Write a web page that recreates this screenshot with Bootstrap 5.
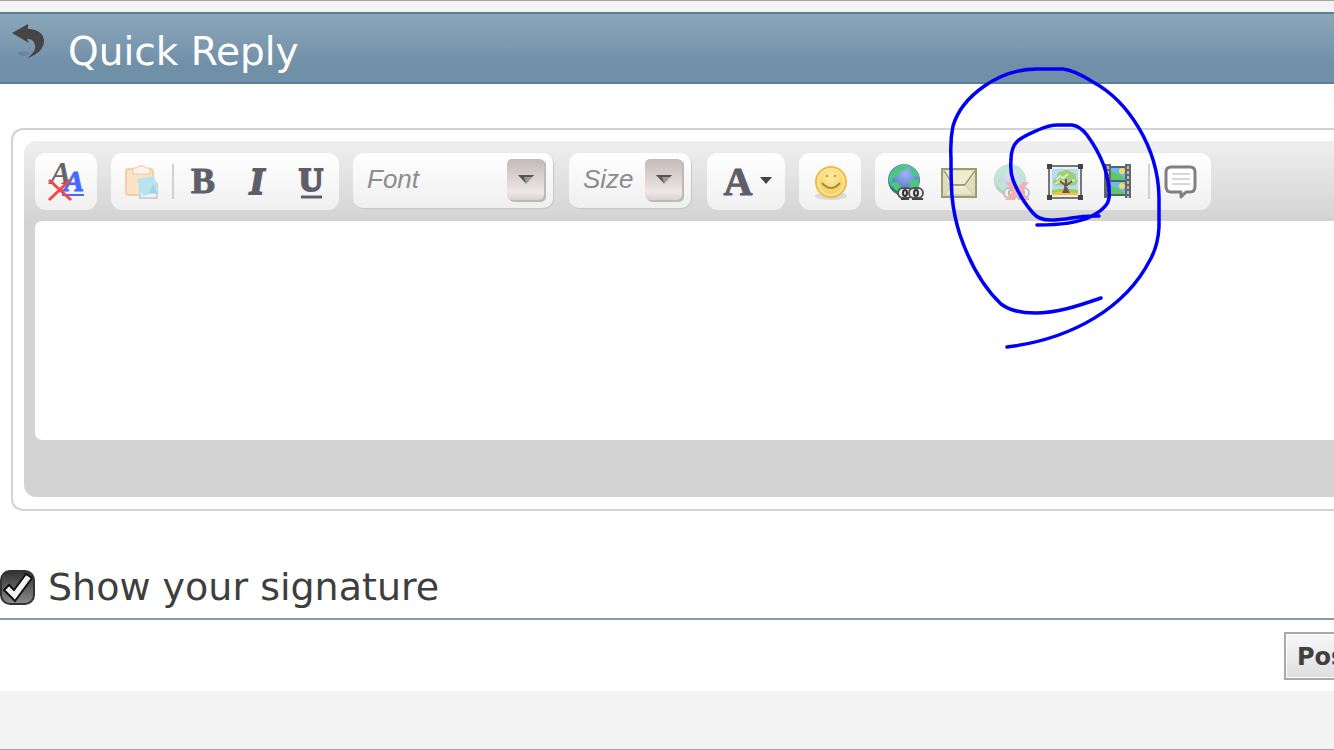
<!DOCTYPE html>
<html lang="en">
<head>
<meta charset="utf-8">
<meta name="viewport" content="width=device-width, initial-scale=1">
<title>Quick Reply</title>
<link rel="stylesheet" href="https://cdn.jsdelivr.net/npm/bootstrap@5.3.0/dist/css/bootstrap.min.css">
<style>
body { background: #f3f3f3; font-family: Verdana, "DejaVu Sans", sans-serif; color: #3e3e3e; }
.page { border-top: 1px solid #a3a3a3; border-bottom: 1px solid #a3a3a3; padding-top: 11px; min-height: 100vh; }
.block-head { height: 72px; border-top: 2px solid #5b7f9b; border-bottom: 2px solid #5b7f9b; background: linear-gradient(#8ca6ba, #7090a8 75%); padding-left: 12px; }
.block-head h2 { font-size: 39px; line-height: 44px; padding: 16px 0 0 22px; }
.block-head svg { margin-top: 10px; }
.block-body { padding: 44px 0 50px 11px; }
.editor-frame { border: 2px solid #d3d3d3; border-right: 0; border-radius: 12px 0 0 12px; padding: 11px 0 12px 11px; }
.editor { background: linear-gradient(#efefef, #d3d3d3 80px); border-radius: 12px 0 0 12px; padding: 12px 0 57px 11px; }
.tools { gap: 14px; margin-bottom: 11px; }
.group { height: 57px; border-radius: 11px; background: linear-gradient(#fff, #f0f0f0); }
.tool { width: 54px; height: 57px; border: 0; padding: 0; background: none; display: flex; align-items: center; justify-content: center; }
.links .tool { width: 53px; }
.tool svg { display: block; overflow: visible; }
.tool text { font-family: "Liberation Serif", serif; font-weight: 700; }
.rule { width: 2px; height: 35px; background: #d0d0d0; margin: 0 3px; }
.links .rule { margin: 0 4px; }
.combo { height: 55px; margin-right: 2px; border-radius: 10px; background: linear-gradient(#fff, #efefef); box-shadow: 1px 1px 1px #c6c6c6; }
.combo select { appearance: none; border: 0; background: none; width: 100%; height: 52px; padding: 0 0 0 14px; font: italic 26px "Liberation Sans", sans-serif; color: #8d8d8d; }
.combo svg { position: absolute; right: 7px; top: 6px; pointer-events: none; }
.font-combo { width: 200px; }
.size-combo { width: 122px; }
.message { display: block; width: 100%; height: 219px; border: 0; border-radius: 7px 0 0 7px; resize: none; background: #fff; padding: 12px; }
.signature { height: 57px; padding-bottom: 5px; }
.signature label { font-size: 38px; line-height: 50px; padding: 0 0 0 13px; }
.tick { appearance: none; width: 35px; height: 35px; margin: 0; border: 2px solid #333; border-radius: 10px; background: linear-gradient(#343434, #888); }
.tick:checked { background: url("data:image/svg+xml,%3Csvg xmlns='http://www.w3.org/2000/svg' viewBox='2 2 31 31'%3E%3Cpath d='M4 20l5-5 5 5L26 4l6 4-17 23z' fill='%23f3f3f3' stroke='%23111' stroke-width='2'/%3E%3C/svg%3E") center / 100% 100%, linear-gradient(#343434, #888); }
.actions { border-top: 2px solid #7f9db3; padding: 12px 0 11px; }
.post-slot { width: 50px; }
.post { height: 48px; border: 2px solid #a9a9a9; box-shadow: inset 0 0 0 1px #fff; background: linear-gradient(#f8f8f8, #dedede); font: 700 24px "DejaVu Sans", sans-serif; color: #404040; padding: 2px 11px 0; }
.ink { position: absolute; left: 940px; top: 59px; pointer-events: none; }
</style>
</head>
<body>
<main class="page position-relative overflow-hidden">
<form class="bg-white">
  <header class="block-head d-flex align-items-start">
    <svg width="34" height="38" viewBox="0 0 34 38" aria-hidden="true">
      <path d="M0 9L16 0v5c11 0 16 6 16 12 0 7-6 14-17 17 7-5 9-9 8-13-1-5-4-6-8-6l2 4z" fill="#454545"/>
      <path d="M5 29c4-2 9-2 13 0-3 3-8 5-13 0z" fill="#456279" opacity=".3"/>
    </svg>
    <h2 class="m-0 fw-normal text-white">Quick Reply</h2>
  </header>

  <div class="block-body">
    <div class="editor-frame">
      <div class="editor">
        <div class="tools d-flex" role="toolbar" aria-label="Formatting">
          <div class="group d-flex px-1">
            <button type="button" class="tool" aria-label="Remove formatting">
              <svg width="36" height="36" viewBox="0 0 36 36">
                <text x="2" y="20" font-size="32" font-style="italic" fill="#666">A</text>
                <text x="16" y="27" font-size="30" font-style="italic" fill="#4668ff" stroke="#4668ff">A</text>
                <path d="M14 31h22" stroke="#4668ff" stroke-width="2"/>
                <path d="M1 16l22 20M22 16L1 36" stroke="#fa4545" stroke-width="3"/>
              </svg>
            </button>
          </div>

          <div class="group d-flex align-items-center ps-1">
            <button type="button" class="tool" aria-label="Paste">
              <svg width="36" height="36" viewBox="0 0 36 36">
                <rect x="2" y="5" width="27" height="26" rx="3" fill="#fbe3c6" stroke="#efcfaa" stroke-width="2"/>
                <path d="M9 10V4h4l2-2h5l2 2h4v6z" fill="#fff4e7" stroke="#e4c9ac"/>
                <path d="M16 15h12l5 5v14H16z" fill="#eef3f4" stroke="#ccd3d7" stroke-width="2"/>
                <path d="M13 15l17-3 4 16-15 4z" fill="#b9e3f1"/>
                <path d="M29 20l5 10-9-1z" fill="#9fd3e6"/>
              </svg>
            </button>
            <span class="rule"></span>
            <button type="button" class="tool" aria-label="Bold">
              <svg width="36" height="36" viewBox="0 0 36 36"><text x="17" y="29" text-anchor="middle" font-size="36" fill="#5e5e69" stroke="#5e5e69">B</text></svg>
            </button>
            <button type="button" class="tool" aria-label="Italic">
              <svg width="36" height="36" viewBox="0 0 36 36"><text x="17" y="30" text-anchor="middle" font-size="38" font-style="italic" fill="#5e5e69" stroke="#5e5e69" stroke-width="2">I</text></svg>
            </button>
            <button type="button" class="tool" aria-label="Underline">
              <svg width="36" height="36" viewBox="0 0 36 36"><text x="17" y="27" text-anchor="middle" font-size="34" fill="#5e5e69" stroke="#5e5e69" stroke-width="2">U</text><path d="M7 33h21" stroke="#5e5e69" stroke-width="3"/></svg>
            </button>
          </div>

          <div class="combo font-combo position-relative">
            <select aria-label="Font"><option>Font</option></select>
            <svg width="39" height="43" viewBox="0 0 39 43" aria-hidden="true">
              <defs><linearGradient id="knob" x2="0" y2="1"><stop stop-color="#c3b9b9"/><stop offset=".8" stop-color="#eee7e7"/><stop offset="1" stop-color="#d8d2d2"/></linearGradient></defs>
              <rect x="2" y="1" width="37" height="42" rx="5" fill="#bdb9b9"/><rect width="37" height="41" rx="5" fill="url(#knob)"/>
              <path d="M11 16h16l-8 9z" fill="#999"/><path d="M11 16h16l-2 2h-8l2 6z" fill="#555"/>
            </svg>
          </div>

          <div class="combo size-combo position-relative">
            <select aria-label="Size"><option>Size</option></select>
            <svg width="39" height="43" viewBox="0 0 39 43" aria-hidden="true">
              <rect x="2" y="1" width="37" height="42" rx="5" fill="#bdb9b9"/><rect width="37" height="41" rx="5" fill="url(#knob)"/>
              <path d="M11 16h16l-8 9z" fill="#999"/><path d="M11 16h16l-2 2h-8l2 6z" fill="#555"/>
            </svg>
          </div>

          <div class="group d-flex px-2">
            <button type="button" class="tool w-auto ps-1" aria-label="Text colour">
              <svg width="58" height="36" viewBox="0 0 58 36">
                <text x="19" y="31" text-anchor="middle" font-size="40" fill="#5e5e69" stroke="#5e5e69">A</text>
                <path d="M41 13h12l-6 7z" fill="#444"/>
              </svg>
            </button>
          </div>

          <div class="group d-flex px-1">
            <button type="button" class="tool" aria-label="Smilies">
              <svg width="36" height="36" viewBox="0 0 36 36">
                <defs><radialGradient id="face" cy=".35"><stop stop-color="#fdeea4"/><stop offset="1" stop-color="#f8d264"/></radialGradient></defs>
                <ellipse cx="19" cy="32" rx="16" ry="4" fill="#dadada"/>
                <circle cx="19" cy="18" r="15" fill="url(#face)" stroke="#f4b83d" stroke-width="2"/>
                <circle cx="19" cy="18" r="13" fill="none" stroke="#fbe49a" stroke-width="2"/>
                <circle cx="15" cy="12" r="1" fill="#9c8243"/><circle cx="23" cy="12" r="1" fill="#9c8243"/>
                <path d="M10 19q9 10 18 0" fill="none" stroke="#a18b45" stroke-width="2"/>
              </svg>
            </button>
          </div>

          <div class="group links d-flex align-items-center px-1">
            <button type="button" class="tool" aria-label="Insert link">
              <svg width="36" height="36" viewBox="0 0 36 36">
                <defs>
                  <radialGradient id="sea" cx=".55" cy=".3" r=".7"><stop stop-color="#9ab9f5"/><stop offset="1" stop-color="#4562b8"/></radialGradient>
                  <g id="globe">
                    <circle cx="16" cy="16" r="16" fill="url(#sea)"/>
                    <path d="M3 9C7 2 15-1 21 1l-4 5-6 1-1 5-5 2-2 5-2-1q-1-5 2-9M2 19l7-1 5 5-2 8Q4 28 2 19M22 2q7 3 9 11l-5-1-4-5zM22 16l9-1q1 7-4 12l-5-4z" fill="#4acb79"/>
                    <path d="M3 23q7 8 15 8" fill="none" stroke="#287f50" stroke-width="2"/>
                  </g>
                  <g id="chain">
                    <rect x="10" y="24" width="14" height="10" rx="5" fill="#eee" stroke="#555" stroke-width="2"/>
                    <rect x="21" y="24" width="14" height="10" rx="5" fill="#eee" stroke="#555" stroke-width="2"/>
                    <path d="M13 35h8M24 35h11" stroke="#444" stroke-width="2"/>
                    <ellipse cx="17" cy="29" rx="2" ry="3" fill="#ddd" stroke="#333" stroke-width="2"/><ellipse cx="28" cy="29" rx="2" ry="3" fill="#ddd" stroke="#333" stroke-width="2"/>
                  </g>
                </defs>
                <use href="#globe"/><use href="#chain"/>
              </svg>
            </button>
            <button type="button" class="tool" aria-label="Insert email">
              <svg width="36" height="36" viewBox="0 0 36 36">
                <rect x="1" y="5" width="34" height="28" fill="#deddb6" stroke="#9c9b78" stroke-width="2"/>
                <path d="M3 31l10-11h10l10 11z" fill="#e9e8c8" stroke="#c8c7a5"/>
                <path d="M3 7l9 14h12L34 7" fill="#eeedd0" stroke="#a09f7a" stroke-width="2"/>
                <path d="M3 9l9 14h12L34 9" fill="none" stroke="#fff" opacity=".7"/>
              </svg>
            </button>
            <button type="button" class="tool" aria-label="Remove link">
              <svg width="36" height="36" viewBox="0 0 36 36" opacity=".32">
                <use href="#globe"/><use href="#chain"/>
                <path d="M11 18h8l5 5 5-5h6l-7 9 7 9h-8l-4-5-4 5h-8l8-9z" fill="#f22"/>
              </svg>
            </button>
            <button type="button" class="tool" aria-label="Insert image">
              <svg width="36" height="36" viewBox="0 0 36 36">
                <rect x="2" y="2" width="32" height="32" fill="#b4dcfa" stroke="#777" stroke-width="2"/>
                <rect x="4" y="4" width="28" height="28" fill="none" stroke="#eee" stroke-width="2"/>
                <path d="M5 26q13-3 26 0v5H5z" fill="#a6cf3d"/><path d="M5 29q10-3 26 0v2H5z" fill="#efc345"/>
                <path d="M6 19q0-5 4-6 0-6 6-6 5-3 8 1 6 1 5 6 3 4-1 7-5 2-8-1-5 3-8 1-5 2-6-2" fill="#a1ce75"/>
                <path d="M9 16l4-4 3 2 5-4M8 20l5-3 4 1M22 18l6-2" stroke="#d8edc5" stroke-width="2" fill="none"/>
                <path d="M19 29l-1-8-5-4M19 22l6-5M19 21v-6" stroke="#765252" stroke-width="2" fill="none"/><path d="M15 29l3-6h2l3 6z" fill="#765252"/>
                <path d="M0 0h5v5H0zM31 0h5v5h-5zM0 31h5v5H0zM31 31h5v5h-5z" fill="#444"/>
              </svg>
            </button>
            <button type="button" class="tool" aria-label="Insert video">
              <svg width="36" height="36" viewBox="0 0 36 36">
                <path d="M11 3h14v28H11z" fill="#65bdf3"/>
                <path d="M11 7q7 1 14 8v1H11zM11 22q7 1 14 8v1H11z" fill="#61c764"/>
                <circle cx="22" cy="7" r="3" fill="#f6dc59"/><circle cx="22" cy="22" r="3" fill="#f6dc59"/>
                <path d="M11 3h14M11 17h14M11 31h14" stroke="#4d6673" stroke-width="2"/>
                <path d="M4 0h7v34H4zM25 0h6v34h-6z" fill="#666"/>
                <path d="M8 2v32M28 2v32" stroke="#bbb" stroke-width="2" stroke-dasharray="3 2"/>
              </svg>
            </button>
            <span class="rule"></span>
            <button type="button" class="tool" aria-label="Wrap in quote">
              <svg width="36" height="36" viewBox="0 0 36 36">
                <path d="M8 3h19q5 0 5 5v14q0 6-5 6h-4l-5 5v-5H8q-5 0-5-6V8q0-5 5-5z" fill="#fff" stroke="#808080" stroke-width="3" stroke-linejoin="round"/>
                <path d="M9 10h18M9 15h18M9 20h18" stroke="#d8d8d8" stroke-width="2"/>
              </svg>
            </button>
          </div>
        </div>
        <textarea class="message" aria-label="Message"></textarea>
      </div>
    </div>
  </div>

  <div class="signature d-flex align-items-center">
    <input class="tick flex-shrink-0" type="checkbox" id="signature" checked>
    <label for="signature">Show your signature</label>
  </div>

  <div class="actions d-flex justify-content-end">
    <div class="post-slot"><button type="submit" class="post text-nowrap">Post</button></div>
  </div>
</form>

<!-- freehand pen marks over the toolbar -->
<svg class="ink" width="230" height="296" viewBox="940 60 230 296" fill="none" stroke="#0000fa" stroke-width="3.5" stroke-linecap="round" aria-hidden="true">
  <path d="M1101 298C1078 306 1057 313 1035 313Q1013 313 1001 304C983 287 970 264 960 235C951 207 951 188 951 158Q950 140 953 126C962 96 999 69 1037 69H1063Q1074 70 1093 82C1128 101 1158 147 1159 197V227Q1158 246 1150 260C1126 307 1073 339 1007 347"/>
  <path d="M1099 216C1076 215 1070 220 1050 220Q1039 220 1033 213Q1020 198 1013 180Q1010 172 1011 160C1011 141 1020 138 1038 130Q1049 125 1058 125H1072Q1080 126 1087 135Q1098 150 1104 166Q1110 184 1109 197C1109 207 1096 214 1090 217Q1073 225 1037 225"/>
</svg>
</main>
<script src="https://cdn.jsdelivr.net/npm/bootstrap@5.3.0/dist/js/bootstrap.bundle.min.js"></script>
</body>
</html>
